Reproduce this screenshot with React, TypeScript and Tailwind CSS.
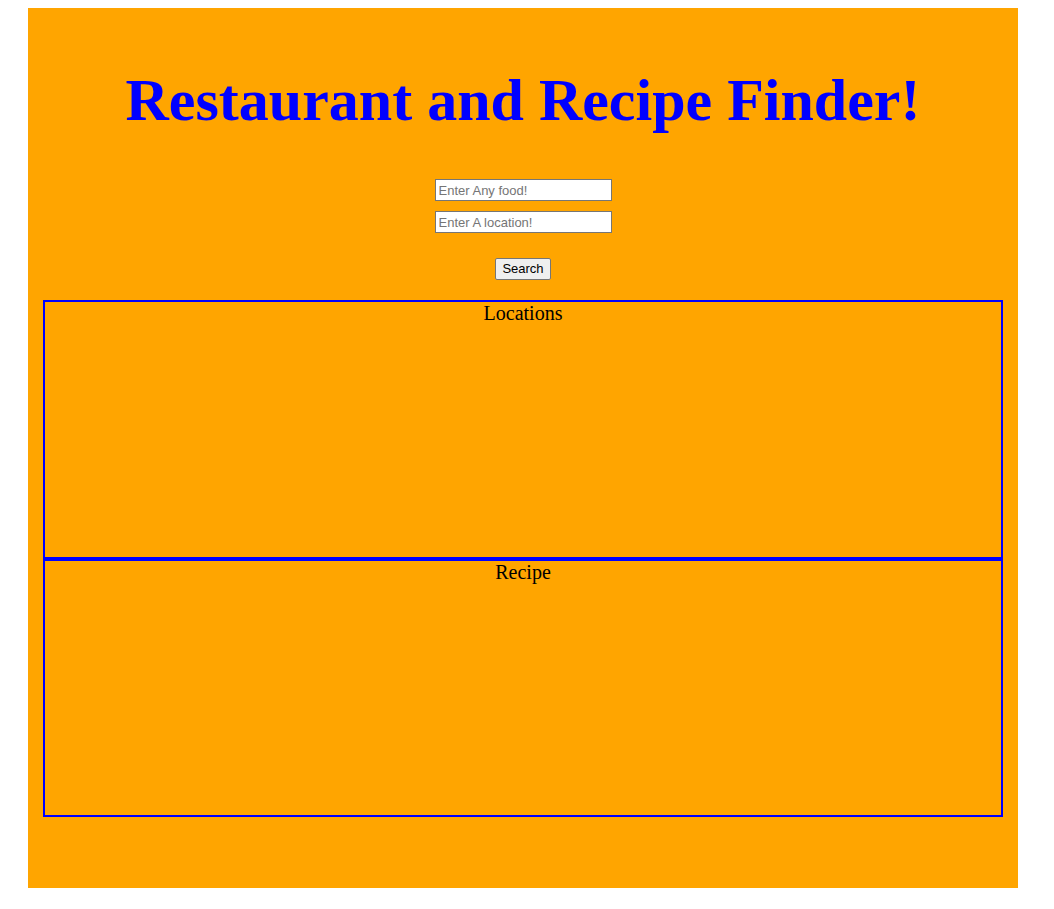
import React from 'react';

const serif = { fontFamily: '"Liberation Serif", "Times New Roman", serif' };

export default function App() {
  return (
    <div className="min-h-screen bg-white pt-2 pl-7">
      <div className="w-[990px] h-[880px] bg-[#ffa500] flex flex-col items-center" style={serif}>
        {/* Title */}
        <h1 className="mt-[55px] text-[60px] leading-[74px] font-bold text-[#0000ff]">
          Restaurant and Recipe Finder!
        </h1>

        {/* Search form */}
        <div className="mt-[42px] flex flex-col items-center gap-[10px] font-['Liberation_Sans',Arial,sans-serif]">
          <input
            type="text"
            placeholder="Enter Any food!"
            className="w-[177px] h-[22px] px-[3px] text-[13px] bg-white border border-[#767676] placeholder:text-[#757575] outline-none"
          />
          <input
            type="text"
            placeholder="Enter A location!"
            className="w-[177px] h-[22px] px-[3px] text-[13px] bg-white border border-[#767676] placeholder:text-[#757575] outline-none"
          />
          <button className="mt-[15px] w-[56px] h-[22px] text-[13px] text-black bg-[#efefef] border border-[#767676] rounded-[2px]">
            Search
          </button>
        </div>

        {/* Results */}
        <div className="mt-[20px] w-[960px] flex flex-col">
          <div className="h-[259px] border-2 border-[#0000ff] text-center text-[20px] text-black leading-[22px]">
            Locations
          </div>
          <div className="h-[258px] border-2 border-[#0000ff] text-center text-[20px] text-black leading-[22px]">
            Recipe
          </div>
        </div>
      </div>
    </div>
  );
}
